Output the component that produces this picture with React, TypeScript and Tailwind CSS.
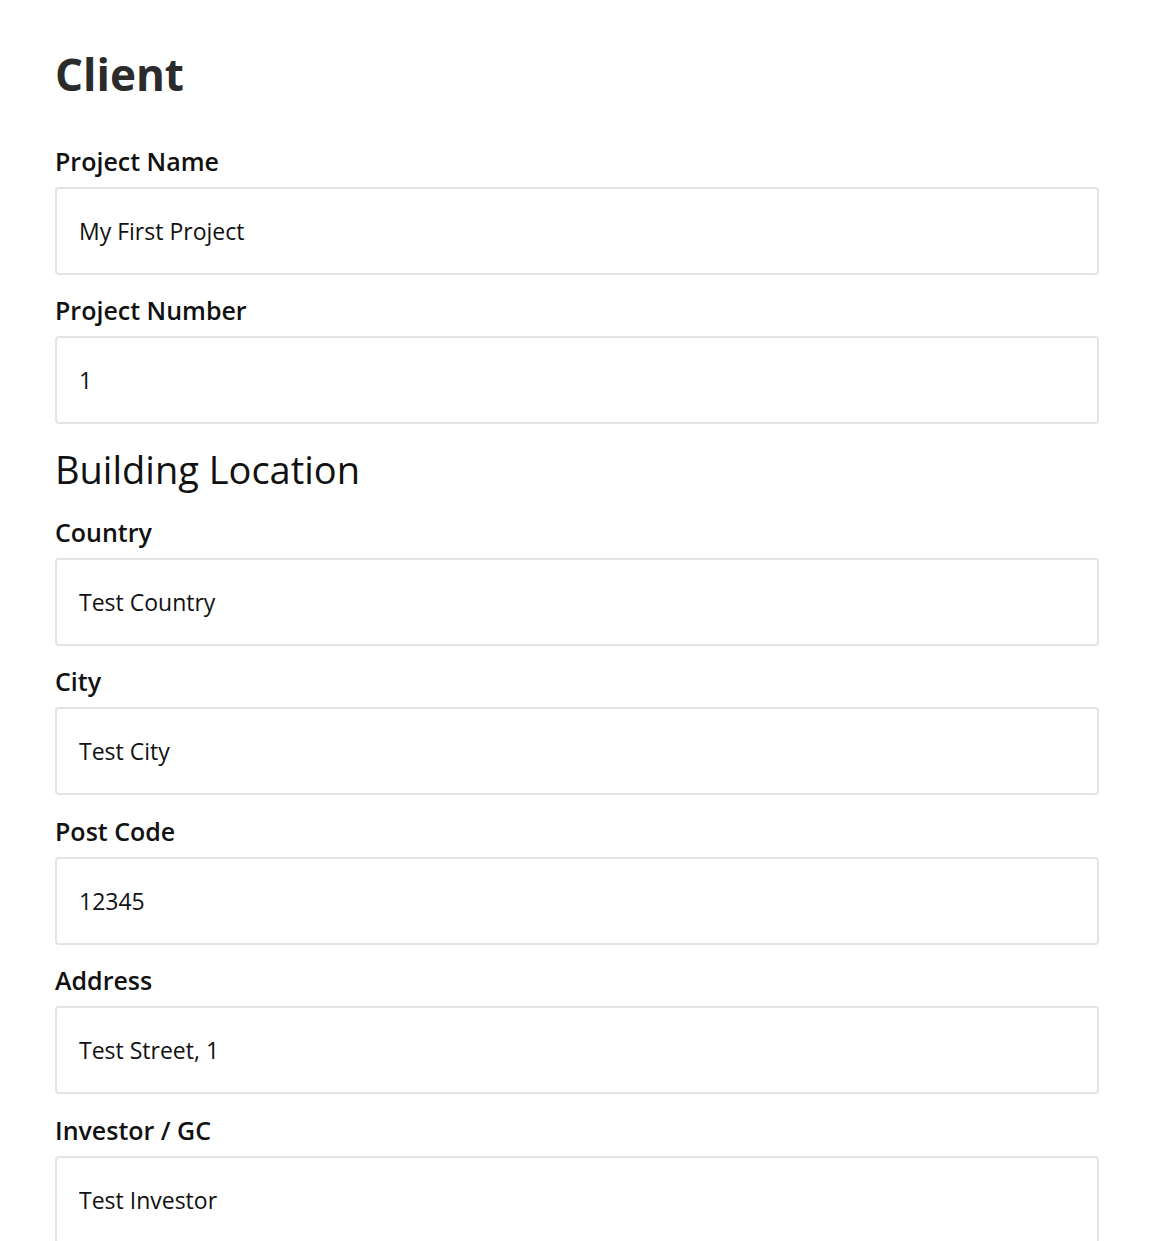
import React from "react";

const Field = ({ label, value }: { label: string; value: string }) => (
  <div className="mb-[17.5px]">
    <label className="block text-[25px] leading-[36px] font-semibold text-[#111]">{label}</label>
    <input
      readOnly
      defaultValue={value}
      className="mt-[8px] block w-full h-[88px] border-2 border-[#e4e4e4] rounded-[4px] px-[22px] text-[23px] text-[#111] bg-white outline-none"
    />
  </div>
);

export default function App() {
  return (
    <div
      className="bg-white min-h-[1241px] pl-[55px] pr-[63px] pt-[48px] overflow-hidden"
      style={{ fontFamily: '"Open Sans", "Noto Sans", sans-serif' }}
    >
      <h1 className="text-[44px] leading-[1.2] font-bold text-[#2b2b2b] mb-[42px]">Client</h1>
      <Field label="Project Name" value="My First Project" />
      <Field label="Project Number" value="1" />
      <h2 className="mt-[23px] text-[38px] leading-[1.2] font-normal text-[#111] mb-[21px]">Building Location</h2>
      <Field label="Country" value="Test Country" />
      <Field label="City" value="Test City" />
      <Field label="Post Code" value="12345" />
      <Field label="Address" value="Test Street, 1" />
      <Field label="Investor / GC" value="Test Investor" />
    </div>
  );
}
